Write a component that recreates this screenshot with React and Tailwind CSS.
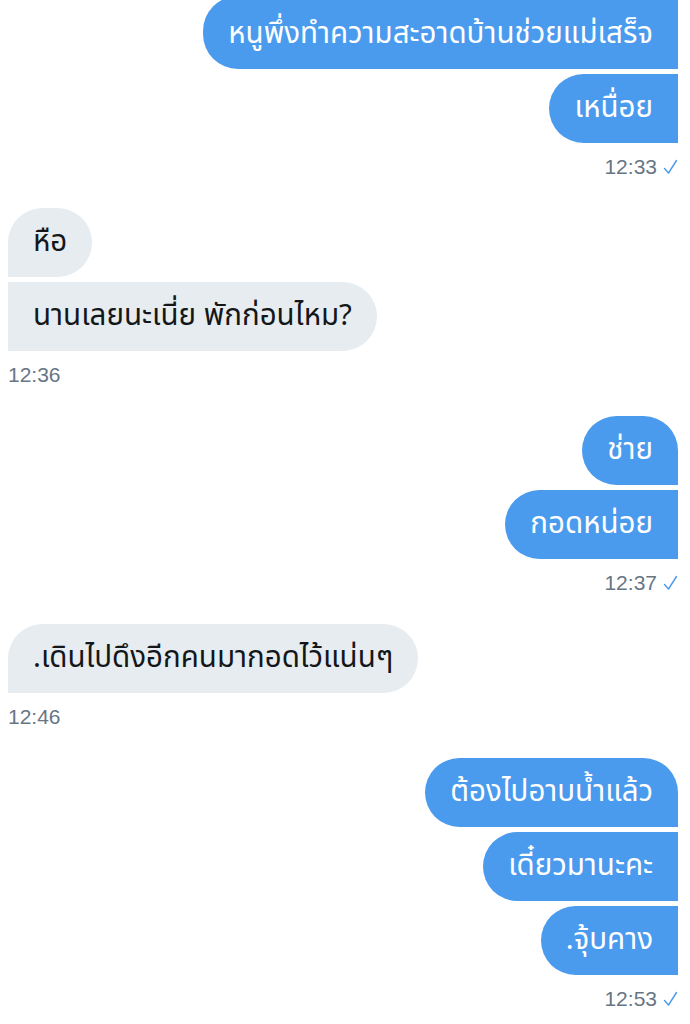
import React from 'react';

const thai = { fontFamily: '"Noto Sans Thai", "Noto Sans Thai Looped", Loma, Garuda, "Noto Sans", sans-serif' };

// first group continues from messages above the screen edge
const groups = [
  { side: 'right', time: '12:33', cont: true, msgs: ['หนูพึ่งทำความสะอาดบ้านช่วยแม่เสร็จ', 'เหนื่อย'] },
  { side: 'left', time: '12:36', msgs: ['หือ', 'นานเลยนะเนี่ย พักก่อนไหม?'] },
  { side: 'right', time: '12:37', msgs: ['ช่าย', 'กอดหน่อย'] },
  { side: 'left', time: '12:46', msgs: ['.เดินไปดึงอีกคนมากอดไว้แน่นๆ'] },
  { side: 'right', time: '12:53', msgs: ['ต้องไปอาบน้ำแล้ว', 'เดี๋ยวมานะคะ', '.จุ้บคาง'] },
];

const Check = () => (
  <svg width="15" height="16" viewBox="0 0 15 16" fill="none" className="ml-[6px]">
    <path d="M1.5 9.5 L5.5 14 L13.5 1.5" stroke="#4a9bee" strokeWidth="1.4" strokeLinecap="round" strokeLinejoin="round" />
  </svg>
);

const Bubble = ({ text, side, first, cut }) => {
  const right = side === 'right';
  let cls = 'px-[25px] flex items-center text-[29.5px] whitespace-nowrap ';
  cls += cut ? 'h-[73px] -mt-[4px] ' : 'h-[69px] ';
  if (right) {
    cls += 'bg-[#4a9bee] text-white rounded-l-[35px] ' + (first ? 'rounded-tr-[35px]' : '');
  } else {
    cls += 'bg-[#e6ecf0] text-[#14171a] rounded-r-[35px] ' + (first ? 'rounded-tl-[35px]' : '');
  }
  return (
    <div className={cls} style={thai}>
      {cut ? <span className="pt-[4px]">{text}</span> : text}
    </div>
  );
};

export default function App() {
  return (
    <div className="w-[690px] h-[1024px] overflow-hidden bg-white pl-2 pr-3">
      {groups.map((g, i) => (
        <div key={i} className={'flex flex-col ' + (i > 0 ? 'mt-[29px] ' : '') + (g.side === 'right' ? 'items-end' : 'items-start')}>
          <div className={'flex flex-col gap-[5px] ' + (g.side === 'right' ? 'items-end' : 'items-start')}>
            {g.msgs.map((m, j) => (
              <Bubble key={j} text={m} side={g.side} first={j === 0 && !g.cont} cut={j === 0 && g.cont} />
            ))}
          </div>
          <div className="mt-3 h-6 flex items-center text-[21px] text-[#687684] font-['Liberation_Sans',sans-serif]">
            {g.time}
            {g.side === 'right' && <Check />}
          </div>
        </div>
      ))}
    </div>
  );
}
